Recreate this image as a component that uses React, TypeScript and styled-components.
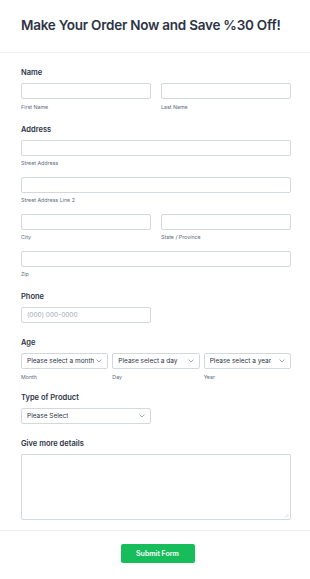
import React from 'react';
import styled, { createGlobalStyle } from 'styled-components';

const GlobalStyle = createGlobalStyle`
  * { box-sizing: border-box; }
  body {
    margin: 0;
    background: #ffffff;
    font-family: Inter, "Noto Sans", sans-serif;
    color: #2c3345;
  }
`;

const Chevron = () => (
  <svg width="6" height="4" viewBox="0 0 6 4" fill="none">
    <polyline points="0.8,0.8 3,3 5.2,0.8" stroke="#7a8497" strokeWidth="0.7" strokeLinecap="round" strokeLinejoin="round" />
  </svg>
);

const Grip = () => (
  <svg width="5" height="5" viewBox="0 0 5 5" fill="none">
    <line x1="4.5" y1="0.8" x2="0.8" y2="4.5" stroke="#c4c9d2" strokeWidth="0.6" />
    <line x1="4.5" y1="2.6" x2="2.6" y2="4.5" stroke="#c4c9d2" strokeWidth="0.6" />
  </svg>
);

interface ISelectProps {
  value: string;
  width?: string;
}

const Select = ({ value, width }: ISelectProps) => (
  <SelectBox style={width ? { width } : undefined}>
    <SelectText>{value}</SelectText>
    <ChevronSlot>
      <Chevron />
    </ChevronSlot>
  </SelectBox>
);

export default function App() {
  return (
    <Page>
      <GlobalStyle />
      <Header>
        <Title>Make Your Order Now and Save %30 Off!</Title>
      </Header>

      <Body>
        <Field>
          <Label>Name</Label>
          <Row>
            <Column>
              <Input />
              <SubLabel>First Name</SubLabel>
            </Column>
            <Column>
              <Input />
              <SubLabel>Last Name</SubLabel>
            </Column>
          </Row>
        </Field>

        <Field>
          <Label>Address</Label>
          <Column>
            <Input />
            <SubLabel>Street Address</SubLabel>
          </Column>
          <Column $spaced>
            <Input />
            <SubLabel>Street Address Line 2</SubLabel>
          </Column>
          <Row $spaced>
            <Column>
              <Input />
              <SubLabel>City</SubLabel>
            </Column>
            <Column>
              <Input />
              <SubLabel>State / Province</SubLabel>
            </Column>
          </Row>
          <Column $spaced>
            <Input />
            <SubLabel>Zip</SubLabel>
          </Column>
        </Field>

        <Field $gap="15px">
          <Label>Phone</Label>
          <Input $half placeholder="(000) 000-0000" />
        </Field>

        <Field $gap="12.5px">
          <Label>Age</Label>
          <AgeRow>
            <Column>
              <Select value="Please select a month" />
              <SubLabel>Month</SubLabel>
            </Column>
            <Column>
              <Select value="Please select a day" />
              <SubLabel>Day</SubLabel>
            </Column>
            <Column>
              <Select value="Please select a year" />
              <SubLabel>Year</SubLabel>
            </Column>
          </AgeRow>
        </Field>

        <Field $gap="15px">
          <Label>Type of Product</Label>
          <Select value="Please Select" width="130px" />
        </Field>

        <Field $gap="0">
          <Label>Give more details</Label>
          <TextAreaWrap>
            <TextArea />
            <GripSlot>
              <Grip />
            </GripSlot>
          </TextAreaWrap>
        </Field>
      </Body>

      <Footer>
        <SubmitButton>Submit Form</SubmitButton>
      </Footer>
    </Page>
  );
}

const Page = styled.div`
  width: 310px;
  min-height: 579px;
  background: #ffffff;
`;

const Header = styled.div`
  padding: 17px 21px 18px;
  border-bottom: 1px solid #eceef2;
`;

const Title = styled.h1`
  margin: 0;
  font-size: 13.5px;
  line-height: 17px;
  font-weight: 600;
  color: #2c3345;
  letter-spacing: -0.24px;
  white-space: nowrap;
`;

const Body = styled.div`
  padding: 15px 19px 10px 21px;
  border-bottom: 1px solid #eceef2;
`;

const Field = styled.div<{ $gap?: string }>`
  display: flex;
  flex-direction: column;
  width: 270px;
  padding-bottom: ${(p) => p.$gap ?? '14px'};
`;

const Label = styled.div`
  font-size: 7.5px;
  line-height: 9px;
  font-weight: 600;
  color: #2c3345;
  margin-bottom: 6px;
`;

const Row = styled.div<{ $spaced?: boolean }>`
  display: grid;
  grid-template-columns: 1fr 1fr;
  column-gap: 10px;
  margin-top: ${(p) => (p.$spaced ? '9.5px' : '0')};
`;

const AgeRow = styled.div`
  display: grid;
  grid-template-columns: 1fr 1fr 1fr;
  column-gap: 4px;
`;

const Column = styled.div<{ $spaced?: boolean }>`
  display: flex;
  flex-direction: column;
  min-width: 0;
  margin-top: ${(p) => (p.$spaced ? '9.5px' : '0')};
`;

const Input = styled.input<{ $half?: boolean }>`
  display: block;
  width: ${(p) => (p.$half ? '130px' : '100%')};
  height: 16px;
  padding: 0 5px;
  margin: 0;
  border: 1px solid #d3d7de;
  border-radius: 2px;
  background: #ffffff;
  font-family: Inter, "Noto Sans", sans-serif;
  font-size: 6.5px;
  color: #2c3345;
  outline: none;

  &::placeholder {
    color: #a0a7b4;
  }
`;

const SubLabel = styled.div`
  margin-top: 4.5px;
  font-size: 5.3px;
  line-height: 7px;
  color: #606b80;
  white-space: nowrap;
`;

const SelectBox = styled.div`
  position: relative;
  display: flex;
  align-items: center;
  width: 100%;
  height: 16px;
  padding: 0 12px 0 5px;
  border: 1px solid #d3d7de;
  border-radius: 2px;
  background: #ffffff;
`;

const SelectText = styled.span`
  font-size: 6.5px;
  line-height: 8px;
  color: #2c3345;
  white-space: nowrap;
  overflow: hidden;
`;

const ChevronSlot = styled.span`
  position: absolute;
  right: 5px;
  top: 50%;
  display: flex;
  transform: translateY(-50%);
`;

const TextAreaWrap = styled.div`
  position: relative;
  height: 66px;
`;

const TextArea = styled.textarea`
  display: block;
  width: 100%;
  height: 100%;
  margin: 0;
  padding: 4px 5px;
  border: 1px solid #d3d7de;
  border-radius: 2px;
  background: #ffffff;
  font-family: Inter, "Noto Sans", sans-serif;
  font-size: 6.5px;
  outline: none;
  resize: none;
`;

const GripSlot = styled.span`
  position: absolute;
  right: 2px;
  bottom: 2px;
  display: flex;
`;

const Footer = styled.div`
  display: flex;
  justify-content: center;
  padding: 13px 19px 17px 21px;
`;

const SubmitButton = styled.button`
  width: 74px;
  height: 19px;
  margin-left: 3px;
  padding: 0;
  border: none;
  border-radius: 2px;
  background: #18bd5b;
  color: #ffffff;
  font-family: Inter, "Noto Sans", sans-serif;
  font-size: 7px;
  font-weight: 600;
  cursor: pointer;
`;
